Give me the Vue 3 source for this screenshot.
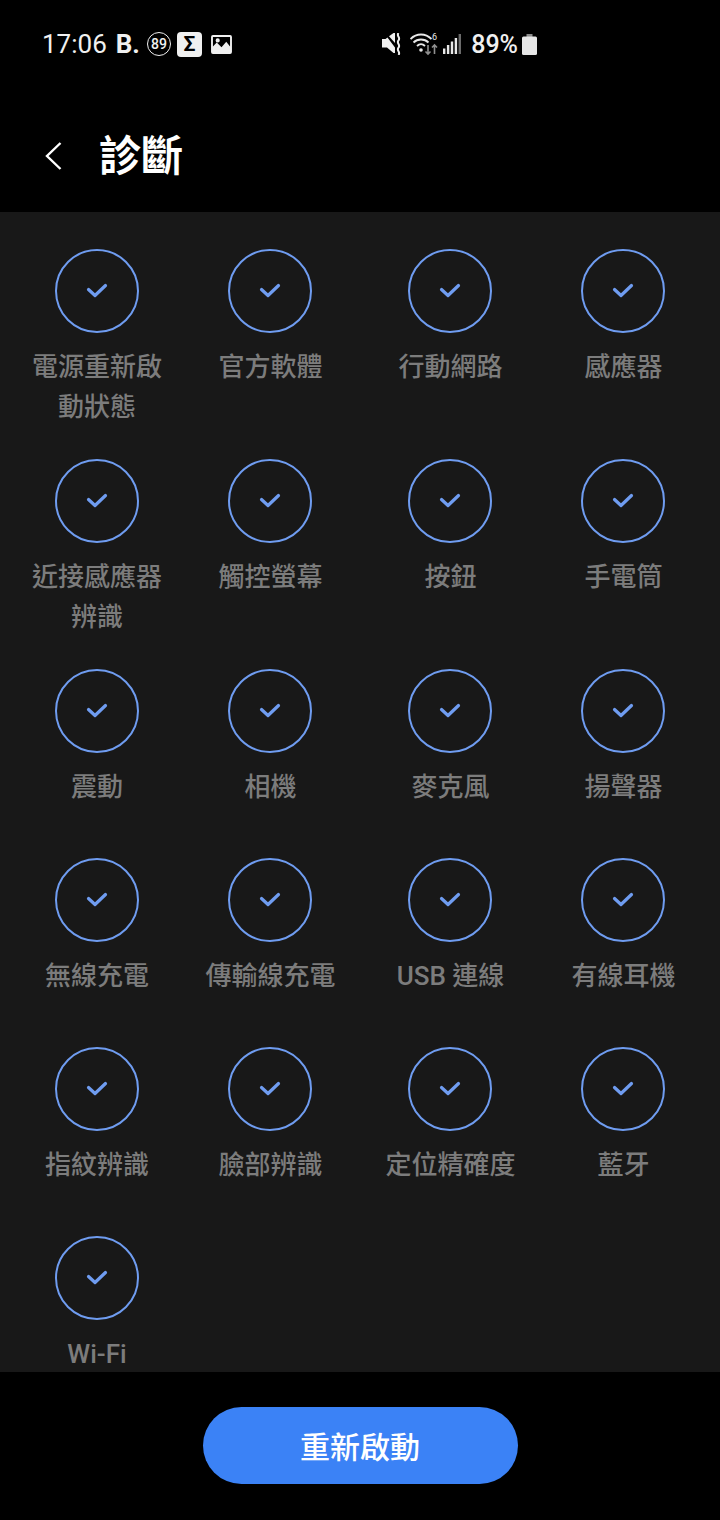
<template>
  <div class="screen">
    <div class="status-bar">
      <div class="status-left">
        <span class="time">17:06</span>
        <span class="carrier">B.</span>
        <span class="count-badge">89</span>
        <span class="sigma">Σ</span>
        <svg class="picture" width="21" height="19" viewBox="0 0 22 20">
          <path fill="#f0f0f0" fill-rule="evenodd" d="M2 0h18a2 2 0 0 1 2 2v16a2 2 0 0 1-2 2H2a2 2 0 0 1-2-2V2a2 2 0 0 1 2-2zM2 2v10l4-4 5 5 5-6 4 5V2zM7 3.500a2.200 2.200 0 1 1 0 4.400a2.200 2.200 0 0 1 0-4.400z" />
        </svg>
      </div>
      <div class="status-right">
        <svg class="mute" width="20" height="22" viewBox="0 0 20 22" fill="none">
          <path fill="#f0f0f0" d="M0 6h3.500l2-1.500L13 14.500V20h-1.500L5 14.500H0z" />
          <path fill="#f0f0f0" d="M7 3.300 11.500 0H13v10z" />
          <path stroke="#f0f0f0" stroke-width="2" d="M16.500 0c-2.500 3 2.500 4.500 0 7.300s2.500 4.400 0 7.300 2.500 4.400 0 7.400" />
        </svg>
        <svg class="wifi" width="28" height="24" viewBox="0 0 28 24" fill="none">
          <path stroke="#e8e8e8" stroke-width="1.800" d="M0.500 7c6-6 15-6 21 0M3.500 10.500c4-4 11-4 15 0M7 14c2.500-2.500 5.500-2.500 8 0" />
          <circle cx="11" cy="18" r="1.800" fill="#e8e8e8" />
          <path stroke="#8f8f8f" stroke-width="1.600" d="M18 13v9M15.500 19.500 18 22l2.500-2.500" />
          <path stroke="#8f8f8f" stroke-width="1.600" d="M24.500 22v-9M22 15.500l2.500-2.500 2.500 2.500" />
          <text x="22" y="8" class="wifi-six">6</text>
        </svg>
        <svg class="signal" width="18" height="20" viewBox="0 0 18 20">
          <rect x="0" y="14.500" width="2.400" height="5.500" fill="#e8e8e8" />
          <rect x="3.900" y="11" width="2.400" height="9" fill="#e8e8e8" />
          <rect x="7.800" y="7.500" width="2.400" height="12.500" fill="#e8e8e8" />
          <rect x="11.700" y="4" width="2.400" height="16" fill="#e8e8e8" />
          <rect x="15.600" y="0" width="2.400" height="20" fill="#6b6b6b" />
        </svg>
        <span class="battery-text">89%</span>
        <svg class="battery" width="15" height="21" viewBox="0 0 15 21">
          <rect x="4.500" y="0" width="6" height="3" fill="#8a8a8a" />
          <rect x="0" y="2.500" width="15" height="18.500" rx="1.500" fill="#e6e6e6" />
        </svg>
      </div>
    </div>

    <div class="header">
      <svg class="back" width="20" height="30" viewBox="0 0 20 30" fill="none">
        <path stroke="#fff" stroke-width="2.400" d="M17.500 2 4 15l13.500 13" />
      </svg>
      <h1>診斷</h1>
    </div>

    <div class="panel">
      <div class="grid">
        <div v-for="item in items" :key="item" class="cell">
          <div class="circle">
            <svg width="24" height="18" viewBox="0 0 24 18" fill="none">
              <path stroke="#6f9cf0" stroke-width="3.200" stroke-linecap="round" stroke-linejoin="round" d="M3.500 7.500 10 13.500 20.500 3.500" />
            </svg>
          </div>
          <div class="label">{{ item }}</div>
        </div>
      </div>
    </div>

    <div class="footer">
      <button class="restart">重新啟動</button>
    </div>
  </div>
</template>

<script setup>
const items = [
  '電源重新啟\n動狀態', '官方軟體', '行動網路', '感應器',
  '近接感應器\n辨識', '觸控螢幕', '按鈕', '手電筒',
  '震動', '相機', '麥克風', '揚聲器',
  '無線充電', '傳輸線充電', 'USB 連線', '有線耳機',
  '指紋辨識', '臉部辨識', '定位精確度', '藍牙',
  'Wi-Fi'
]
</script>

<style>
html, body { margin: 0; background: #000; }
</style>

<style scoped>
.screen {
  width: 720px;
  height: 1520px;
  background: #000;
  display: flex;
  flex-direction: column;
  overflow: hidden;
  font-family: Roboto, "Noto Sans CJK TC", sans-serif;
}
.status-bar {
  height: 88px;
  flex: none;
  display: flex;
  justify-content: space-between;
  align-items: center;
  padding: 0 183px 0 42px;
  color: #f0f0f0;
}
.status-left, .status-right { display: flex; align-items: center; }
.time { font-size: 26px; }
.carrier { font-size: 26px; font-weight: 700; margin-left: 9px; }
.count-badge {
  width: 22px;
  height: 22px;
  margin-left: 7px;
  border: 1.500px solid #f0f0f0;
  border-radius: 50%;
  font-size: 14px;
  font-weight: 500;
  line-height: 22px;
  text-align: center;
}
.sigma {
  width: 25px;
  height: 25px;
  margin-left: 6px;
  border-radius: 4px;
  background: #f0f0f0;
  color: #000;
  font-size: 21px;
  font-weight: 700;
  line-height: 25px;
  text-align: center;
}
.picture { margin-left: 9px; }
.wifi { margin-left: 8px; }
.signal { margin-left: 5px; }
.wifi-six { font-size: 9px; fill: #e8e8e8; font-family: Roboto, sans-serif; }
.battery-text { font-size: 25px; font-weight: 500; margin-left: 10px; }
.battery { margin-left: 4px; }
.header {
  height: 124px;
  flex: none;
  display: flex;
  align-items: center;
  padding-left: 43px;
  box-sizing: border-box;
  padding-top: 14px;
}
.back { margin-top: -2px; }
.header h1 {
  margin: 0 0 0 36px;
  color: #fff;
  font-size: 42px;
  font-weight: 700;
  line-height: 50px;
}
.panel {
  height: 1160px;
  flex: none;
  background: #181818;
  overflow: hidden;
}
.grid {
  display: grid;
  grid-template-columns: 154px 191px 169px 177px;
  grid-template-rows: 210px 210px 189px 189px 189px 100px;
  padding: 37px 0 0 20px;
}
.cell {
  display: flex;
  flex-direction: column;
  align-items: center;
}
.circle {
  width: 84px;
  height: 84px;
  flex: none;
  box-sizing: border-box;
  border: 2px solid #6f9cf0;
  border-radius: 50%;
  display: flex;
  align-items: center;
  justify-content: center;
}
.label {
  margin-top: 15px;
  color: #7c7c7c;
  font-size: 26px;
  font-weight: 500;
  line-height: 39.500px;
  text-align: center;
  white-space: pre-line;
}
.cell:not(:nth-child(4n+1)) .label { padding-left: 2px; }
.footer {
  flex: 1;
  display: flex;
  justify-content: center;
  padding-top: 35px;
}
.restart {
  width: 315px;
  height: 77px;
  border: none;
  border-radius: 39px;
  background: #3b82f6;
  color: #fff;
  font-family: inherit;
  font-size: 30px;
  font-weight: 500;
  padding: 0 0 2px;
}
</style>
